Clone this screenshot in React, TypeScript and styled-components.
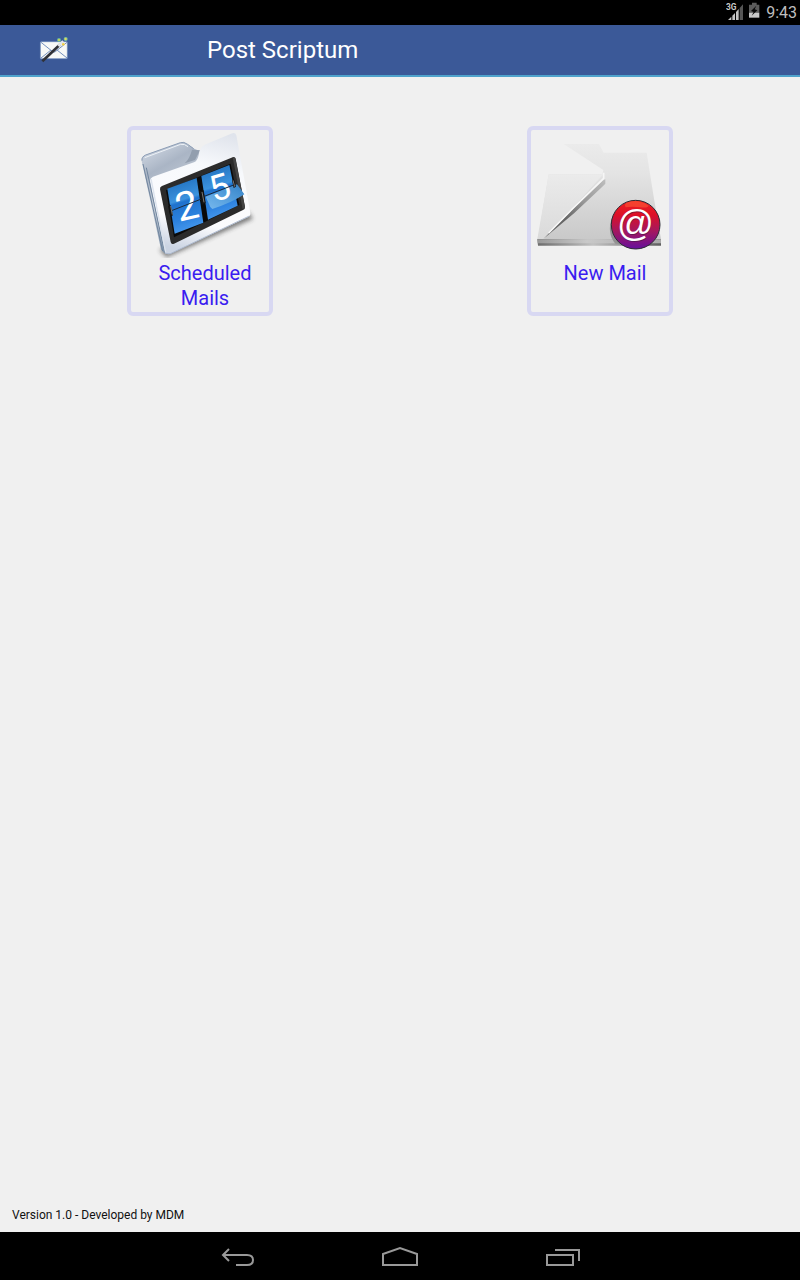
import React from 'react';
import styled, { createGlobalStyle } from 'styled-components';

const GlobalStyle = createGlobalStyle`
  body {
    margin: 0;
    background: #f0f0f0;
    font-family: Roboto, "Liberation Sans", sans-serif;
  }
`;

const Screen = styled.div`
  display: flex;
  flex-direction: column;
  min-height: 100vh;
`;

const StatusBar = styled.div`
  display: flex;
  justify-content: flex-end;
  align-items: center;
  height: 25px;
  padding-right: 3px;
  background: #000;
  color: #bebebe;
`;

const Clock = styled.time`
  margin-left: 5px;
  font-size: 16px;
  line-height: 25px;
`;

const Header = styled.header`
  display: flex;
  align-items: center;
  height: 50px;
  padding-left: 38px;
  background: #3b5998;
  border-bottom: 2px solid #4fa3cc;
`;

const Title = styled.h1`
  margin: 0 0 0 137px;
  color: #fff;
  font-size: 24px;
  font-weight: 400;
  line-height: 32px;
`;

const Main = styled.main`
  flex: 1;
  display: grid;
  grid-template-columns: 1fr 1fr;
  justify-items: center;
  align-items: start;
  padding-top: 49px;
`;

const Card = styled.button`
  display: flex;
  flex-direction: column;
  box-sizing: border-box;
  width: 146px;
  min-height: 190px;
  padding: 0;
  border: 4px solid #d8d8f2;
  border-radius: 6px;
  background: transparent;
  cursor: pointer;
`;

const CardLabel = styled.span`
  align-self: stretch;
  padding: 3px 0 0 10px;
  color: #3a1cf0;
  font-family: Roboto, "Liberation Sans", sans-serif;
  font-size: 20px;
  line-height: 25px;
  text-align: center;
`;

const Footer = styled.footer`
  padding: 0 12px 9px;
  color: #111;
  font-size: 12px;
  line-height: 16px;
`;

const NavBar = styled.nav`
  display: flex;
  justify-content: center;
  height: 48px;
  background: #000;
`;

const NavButton = styled.button`
  display: flex;
  align-items: center;
  justify-content: center;
  width: 162px;
  padding: 0;
  border: 0;
  background: transparent;
  cursor: pointer;
`;

function SignalIcon() {
  return (
    <svg width="20" height="25" viewBox="0 0 60 75" aria-hidden="true">
      <text x="0" y="31" fill="#c8c8c8" fontSize="25" fontWeight="700" fontFamily="Roboto, sans-serif">3G</text>
      <path d="M6 60 16 50V60zM19 60V47L27 39V60zM30 60V36L38 27V60z" fill="#c4c4c4" />
      <path d="M41 60V24L51 13V60z" fill="#555" />
    </svg>
  );
}

function BatteryIcon() {
  return (
    <svg width="15" height="25" viewBox="0 0 45 75" aria-hidden="true">
      <path d="M18 8h14v6h8v24H9V14h9z" fill="#5c5c5c" />
      <path d="M9 38h31v15H9z" fill="#c8c8c8" />
      <path d="M31 17 15 33l8 3-6 11 17-16-8-3z" fill="#080808" />
    </svg>
  );
}

function AppLogo() {
  return (
    <svg width="32" height="32" viewBox="0 0 96 96" aria-hidden="true">
      <rect x="7" y="23" width="81" height="51" rx="3" fill="#f7f9f7" stroke="#6685b8" strokeWidth="2" />
      <path d="M9 25 44 53Q48 56 52 53L87 25M9 72 39 48M87 72 57 48" fill="none" stroke="#7490bd" strokeWidth="3" />
      <path d="M13 82 67 31" stroke="#303238" strokeWidth="8" />
      <path d="M61 36 76 22" stroke="#e2e6ea" strokeWidth="9" />
      <circle cx="63" cy="18" r="6" fill="#69b99a" />
      <circle cx="83" cy="15" r="6" fill="#7dc39b" />
      <circle cx="63" cy="18" r="3" fill="#e2d949" />
      <circle cx="83" cy="15" r="3" fill="#f2d84c" />
      <circle cx="76" cy="31" r="4" fill="#f1cf43" />
    </svg>
  );
}

function ScheduledIcon() {
  return (
    <svg width="138" height="128" viewBox="33 30 414 384" aria-hidden="true">
      <defs>
        <linearGradient id="back" x1="0" y1="0" x2="0.3" y2="1">
          <stop offset="0" stopColor="#d9e0ea" />
          <stop offset="0.3" stopColor="#aab5c5" />
          <stop offset="0.6" stopColor="#c6ced9" />
          <stop offset="1" stopColor="#8396ad" />
        </linearGradient>
        <linearGradient id="front" x1="0.7" y1="0" x2="0.5" y2="1">
          <stop offset="0" stopColor="#e0e4ec" />
          <stop offset="0.28" stopColor="#f7f9fc" />
          <stop offset="0.75" stopColor="#fcfcfe" />
          <stop offset="1" stopColor="#cbd4e3" />
        </linearGradient>
        <linearGradient id="tile" x1="0" y1="0" x2="0.2" y2="1">
          <stop offset="0" stopColor="#1b69b8" />
          <stop offset="0.45" stopColor="#3c93de" />
          <stop offset="0.5" stopColor="#1f72cd" />
          <stop offset="0.8" stopColor="#2d82df" />
          <stop offset="1" stopColor="#4295eb" />
        </linearGradient>
        <linearGradient id="flap" x1="0" y1="1" x2="1" y2="0">
          <stop offset="0" stopColor="#78b9ed" />
          <stop offset="0.5" stopColor="#559fdd" />
          <stop offset="1" stopColor="#3582c6" />
        </linearGradient>
        <filter id="soft" x="-20%" y="-40%" width="140%" height="180%">
          <feGaussianBlur stdDeviation="6" />
        </filter>
      </defs>
      <path d="M118 390 140 412 399 296 384 275z" fill="#333" opacity="0.6" filter="url(#soft)" />
      <path d="M64 117Q65 109 75 105L181 68Q190 64 200 71L224 87 238 92 240 200 150 402Q132 404 123 388L66 128z" fill="url(#back)" />
      <path d="M66 122Q65 110 77 105L181 68Q191 64 203 73L221 86" fill="none" stroke="#8c9db5" strokeWidth="3" />
      <path d="M74 113 182 73Q194 71 204 80" fill="none" stroke="#edf2f7" strokeWidth="3" />
      <path d="M216 89Q209 116 194 130L225 120 240 91z" fill="#929eae" />
      <path d="M90 182Q90 174 99 170L222 127Q232 123 235 109L240 91Q243 80 254 74L337 40Q346 37 349 46L391 278Q393 286 384 291L151 401Q137 407 133 394z" fill="url(#front)" />
      <path d="M69 132 128 393M79 143 134 397" fill="none" stroke="#71869f" strokeWidth="3" />
      <path d="M93 177 137 397" fill="none" stroke="#dce3ed" strokeWidth="4" />
      <path d="M135 400 151 401 388 288" fill="none" stroke="#aebbd0" strokeWidth="3" />
      <path d="M120 208Q119 201 126 198L338 112Q345 109 347 116L375 260Q376 267 369 270L162 371Q154 375 152 366z" fill="#2b2b2b" />
      <path d="M138 211 332 131 358 255 162 352z" fill="#0a0a0a" />
      <path d="M338 112 346 115 375 262 368 268z" fill="#444" />
      <path d="M142 206 230 174 250 308 164 341z" fill="url(#tile)" />
      <path d="M244 168 328 135 353 257 264 299z" fill="url(#tile)" />
      <text x="177" y="305" fontSize="120" fontFamily="Roboto, sans-serif" fill="#fff" transform="rotate(-13 177 305)">2</text>
      <path d="M257 230 351 193 373 223Q336 248 277 267 270 263 267 252z" fill="url(#flap)" />
      <text x="281" y="247" fontSize="108" fontFamily="Roboto, sans-serif" fill="#fff" transform="rotate(-17 281 247)">5</text>
      <path d="M152 273 244 237M255 228 346 193" stroke="#1b2b3b" strokeWidth="3" />
      <path d="M144 259 152 255 159 286 151 290zM238 214 251 211 257 249 246 255zM336 181 342 178 348 200 341 204z" fill="#141414" />
      <path d="M152 258 157 284M246 216 252 247M339 181 344 200" stroke="#777" strokeWidth="3" />
    </svg>
  );
}

function NewMailIcon() {
  return (
    <svg width="138" height="128" viewBox="33 30 414 384" aria-hidden="true">
      <defs>
        <linearGradient id="paper" x1="0" y1="0" x2="0" y2="1">
          <stop offset="0" stopColor="#ebebeb" />
          <stop offset="0.3" stopColor="#e4e4e4" />
          <stop offset="1" stopColor="#c9c9c9" />
        </linearGradient>
        <linearGradient id="left" x1="0" y1="0" x2="0" y2="1">
          <stop offset="0" stopColor="#ebebeb" />
          <stop offset="1" stopColor="#dadada" />
        </linearGradient>
        <linearGradient id="fold" x1="1" y1="0" x2="0" y2="1">
          <stop offset="0" stopColor="#bdbdbd" />
          <stop offset="0.35" stopColor="#999" />
          <stop offset="0.65" stopColor="#666" />
          <stop offset="1" stopColor="#666" />
        </linearGradient>
        <linearGradient id="edge" x1="0" y1="0" x2="1" y2="0">
          <stop offset="0" stopColor="#6c6c6c" />
          <stop offset="0.45" stopColor="#c2c2c2" />
          <stop offset="1" stopColor="#606060" />
        </linearGradient>
        <linearGradient id="ledge" x1="0" y1="0" x2="1" y2="0">
          <stop offset="0" stopColor="#999" />
          <stop offset="0.4" stopColor="#c9c9c9" />
          <stop offset="1" stopColor="#aaa" />
        </linearGradient>
        <linearGradient id="badge" x1="0" y1="0" x2="0" y2="1">
          <stop offset="0" stopColor="#ef2020" />
          <stop offset="0.3" stopColor="#dc1028" />
          <stop offset="0.62" stopColor="#a6175d" />
          <stop offset="1" stopColor="#66109d" />
        </linearGradient>
      </defs>
      <path d="M131 72H237L251 98H380L402 236 423 358H54L86 163H247L250 150z" fill="url(#paper)" />
      <path d="M86 163H250L73 357H52z" fill="url(#left)" />
      <path d="M70 357 155 271 240 190Q250 180 256 178V191L243 204 163 279z" fill="url(#fold)" />
      <path d="M86 339 160 264 251 175V158" fill="none" stroke="#f6f6f6" strokeWidth="5" />
      <path d="M52 357H423V377H54z" fill="url(#edge)" />
      <path d="M53 358H423V370H53z" fill="url(#ledge)" />
      <path d="M278 287Q258 337 286 371L303 372z" fill="#929292" />
      <circle cx="347" cy="314" r="73" fill="url(#badge)" stroke="#2c2c34" strokeWidth="3" />
      <path d="M317 262Q310 251 325 246 357 237 386 257 382 265 360 262 338 258 317 262z" fill="#ff633c" opacity="0.5" />
      <text x="348" y="350" textAnchor="middle" fontFamily="Liberation Sans, sans-serif" fontSize="109" fill="#3e183f" opacity="0.6">@</text>
      <text x="346" y="347" textAnchor="middle" fontFamily="Liberation Sans, sans-serif" fontSize="109" fill="#fff">@</text>
    </svg>
  );
}

const navStroke = { fill: 'none', stroke: '#999', strokeWidth: 2 };

export default function App() {
  return (
    <>
      <GlobalStyle />
      <Screen>
        <StatusBar>
          <SignalIcon />
          <BatteryIcon />
          <Clock>9:43</Clock>
        </StatusBar>
        <Header>
          <AppLogo />
          <Title>Post Scriptum</Title>
        </Header>
        <Main>
          <Card type="button">
            <ScheduledIcon />
            <CardLabel>Scheduled Mails</CardLabel>
          </Card>
          <Card type="button">
            <NewMailIcon />
            <CardLabel>New Mail</CardLabel>
          </Card>
        </Main>
        <Footer>Version 1.0 - Developed by MDM</Footer>
        <NavBar>
          <NavButton type="button" aria-label="Back">
            <svg width="36" height="48" viewBox="0 0 36 48" aria-hidden="true">
              <path d="M9 17 3 23l6 6M3 23h24q6 0 6 5t-6 5H16" {...navStroke} />
            </svg>
          </NavButton>
          <NavButton type="button" aria-label="Home">
            <svg width="36" height="48" viewBox="0 0 36 48" aria-hidden="true">
              <path d="M1 33V22L18 16 35 22V33z" {...navStroke} />
            </svg>
          </NavButton>
          <NavButton type="button" aria-label="Recent apps">
            <svg width="36" height="48" viewBox="0 0 36 48" aria-hidden="true">
              <path d="M3 23H29V33H3zM11 18H35V29" {...navStroke} />
            </svg>
          </NavButton>
        </NavBar>
      </Screen>
    </>
  );
}
